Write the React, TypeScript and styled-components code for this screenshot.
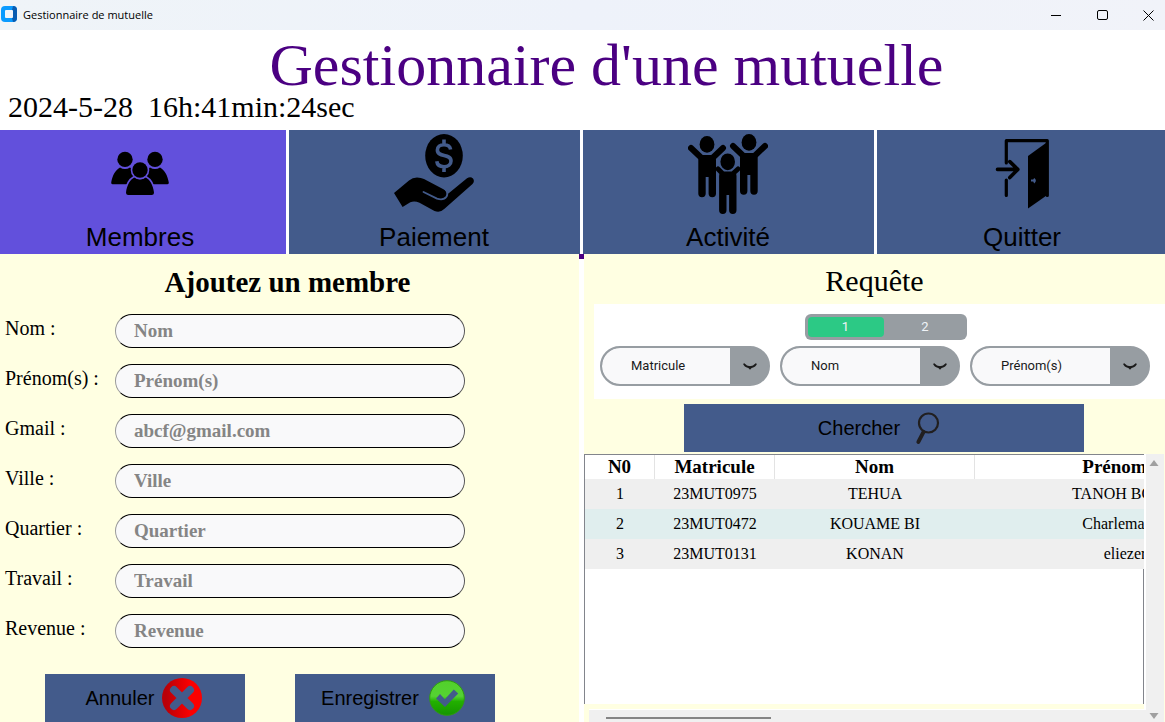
import React from "react";
import styled, { createGlobalStyle } from "styled-components";

const slate = "#435b8b";
const violet = "#6250dc";
const cream = "#ffffe2";
const indigo = "#4b0082";
const grey = "#979da2";
const serif = '"Liberation Serif", "Times New Roman", serif';
const sans = '"Liberation Sans", Arial, sans-serif';
const roboto = 'Roboto, "Liberation Sans", sans-serif';

const GlobalStyle = createGlobalStyle`
  * { box-sizing: border-box; }
  body { margin: 0; background: #fff; color: #000; font-family: ${serif}; overflow-x: hidden; }
  button, input, select { margin: 0; font: inherit; color: inherit; }
`;

const Window = styled.div`
  display: flex;
  flex-direction: column;
  min-height: 100vh;
`;

const TitleBar = styled.header`
  display: flex;
  align-items: center;
  height: 30px;
  margin-right: -6px;
  background: linear-gradient(90deg, #eff4f8, #eef2fa 50%, #f1f3f9);
  font: 11px/16px "Open Sans", "Noto Sans", sans-serif;
`;

const AppName = styled.span`
  flex: 1;
  margin-left: 5px;
`;

const WindowControl = styled.button`
  display: grid;
  place-items: center;
  width: 46px;
  height: 30px;
  padding: 0;
  border: 0;
  background: transparent;
`;

const Banner = styled.div`
  padding: 8px 0;
`;

const Title = styled.h1`
  margin: 0;
  padding-left: 48px;
  text-align: center;
  font: 60px/54px ${serif};
  color: ${indigo};
`;

const Clock = styled.time`
  display: block;
  padding-left: 8px;
  font-size: 30px;
  line-height: 30px;
  white-space: pre;
`;

const Tabs = styled.nav`
  display: grid;
  grid-template-columns: repeat(4, 1fr);
  gap: 3px;
  margin: 0 -3px 0 -5px;
`;

const Tab = styled.button<{ $active?: boolean }>`
  display: flex;
  flex-direction: column;
  align-items: center;
  gap: 8px;
  padding: 4px 1px 2px 0;
  border: 0;
  background: ${(p) => (p.$active ? violet : slate)};
  font: 26px/30px ${sans};
`;

const Body = styled.main`
  flex: 1;
  display: grid;
  grid-template-columns: minmax(0, 579fr) 5px minmax(0, 581fr);
`;

const Divider = styled.div`
  background: #fff;
  border-top: 5px solid ${indigo};
`;

const FormPanel = styled.form`
  padding-top: 12px;
  background: ${cream};
`;

const FormTitle = styled.h2`
  margin: 0 0 16px;
  padding-right: 4px;
  text-align: center;
  font: bold 29px/32px ${serif};
`;

const Fields = styled.div`
  display: grid;
  gap: 16px;
`;

const Field = styled.div`
  display: grid;
  grid-template-columns: 110px minmax(0, 350px);
  padding-left: 5px;
`;

const Label = styled.label`
  font-size: 20px;
  line-height: 28px;
`;

const TextBox = styled.input`
  height: 34px;
  padding: 0 18px;
  border: 1px solid #000;
  border-left-color: #999;
  border-right-color: #555;
  border-radius: 17px;
  background: #f9f9fa;
  font: bold 19px/22px ${serif};
  &::placeholder { color: #858585; opacity: 1; }
`;

const FormActions = styled.div`
  display: flex;
  gap: 50px;
  margin-top: 26px;
  padding-left: 45px;
`;

const ActionButton = styled.button<{ $wide?: boolean }>`
  display: flex;
  align-items: center;
  justify-content: center;
  gap: 8px;
  width: ${(p) => (p.$wide ? 400 : 200)}px;
  height: 48px;
  padding: 0 2px 0 0;
  border: 0;
  background: ${slate};
  font: 20px/24px ${sans};
`;

const QueryPanel = styled.section`
  display: flex;
  flex-direction: column;
  padding-top: 10px;
  background: ${cream};
`;

const QueryTitle = styled.h2`
  margin: 0 0 6px;
  text-align: center;
  font: 30px/34px ${serif};
`;

const FilterBox = styled.div`
  display: grid;
  gap: 6px;
  margin: 0 0 5px 10px;
  padding: 10px 0 13px;
  background: #fff;
  font: 13px/16px ${roboto};
`;

const Segments = styled.div`
  display: grid;
  grid-template-columns: 76px 1fr;
  justify-self: center;
  width: 162px;
  height: 26px;
  margin-left: 12px;
  padding: 3px 0 3px 3px;
  border-radius: 6px;
  background: ${grey};
`;

const Segment = styled.button<{ $active?: boolean }>`
  padding: 0;
  border: 0;
  border-radius: 4px;
  background: ${(p) => (p.$active ? "#2cc985" : "transparent")};
  color: #f0f4f8;
`;

const Filters = styled.div`
  display: flex;
  gap: 10px;
  padding-left: 6px;
`;

const FilterFrame = styled.div<{ $width: number }>`
  display: grid;
  grid-template-columns: minmax(0, 1fr) 38px;
  width: ${(p) => p.$width}px;
  height: 40px;
  border: 2px solid ${grey};
  border-radius: 20px;
  background: ${grey};
  overflow: hidden;
`;

const FilterSelect = styled.select`
  grid-area: 1 / 1;
  padding: 0 0 0 29px;
  border: 0;
  border-radius: 18px 0 0 18px;
  appearance: none;
  background: #f9f9fa;
  color: #1a1a1a;
`;

const FilterArrow = styled.svg`
  place-self: center;
  margin-left: 2px;
`;

const SearchRow = styled.div`
  display: flex;
  justify-content: center;
  margin-bottom: 2px;
  padding-left: 19px;
`;

const Results = styled.div`
  flex: 1;
  display: grid;
  grid-template-columns: minmax(0, 1fr) 20px;
  grid-template-rows: minmax(250px, 1fr) 18px;
  padding-right: 1px;
`;

const TableFrame = styled.div`
  display: flex;
  flex-direction: column;
  overflow: hidden;
  border-top: 1px solid #82858c;
  border-left: 1px solid #82858c;
  background: #fff;
`;

const Table = styled.table`
  width: 690px;
  table-layout: fixed;
  border-collapse: separate;
  border-spacing: 0;
  text-align: center;
`;

const HeadCell = styled.th<{ $width: number }>`
  width: ${(p) => p.$width}px;
  height: 24px;
  padding: 0;
  border-right: 1px solid #e3e3e3;
  font-size: 19px;
  line-height: 24px;
`;

const Row = styled.tr`
  background: #efefef;
  &:nth-child(even) { background: #e0eeee; }
`;

const Cell = styled.td`
  height: 30px;
  padding: 0;
  font-size: 16px;
  line-height: 30px;
`;

const TableRest = styled.div`
  flex: 1;
  border-right: 1px solid #82858c;
`;

const VerticalBar = styled.div`
  grid-area: 1 / 2 / 3 / 3;
  display: flex;
  flex-direction: column;
  justify-content: space-between;
  align-items: center;
  padding: 5px 2px 2px 0;
  border-left: 2px solid #fff;
  background: #f0f0f0;
`;

const HorizontalBar = styled.div`
  grid-area: 2 / 1;
  margin: 5px -2px 0 5px;
  padding: 7px 0 0 17px;
  border-top: 1px solid #fff;
  background: #f0f0f0;
  z-index: 1;
`;

const Thumb = styled.div`
  width: 165px;
  height: 2px;
  background: #858585;
`;

const AppMark = () => (
  <svg width="18" height="18" viewBox="0 0 18 18" aria-hidden="true">
    <rect x="1" y="0" width="16" height="16" rx="4" fill="#0a9bff" />
    <path d="M13 0a4 4 0 0 1 4 4v8a4 4 0 0 1-4 4l-1-4 1-1V5l-1-1z" fill="#0a5cb0" />
    <rect x="5" y="4" width="8" height="8" rx="1" fill="#f2f5fa" />
  </svg>
);

const MembersIcon = () => (
  <svg width="80" height="80" viewBox="0 0 80 80" aria-hidden="true">
    <circle cx="25" cy="25.4" r="7.7" />
    <circle cx="55" cy="25.4" r="7.7" />
    <path d="M12.5 50.2Q11 50.2 11.2 48.6C12.3 41 16 35.5 20 33.4Q25 36.6 30 33.4L36 38V50.2Z" />
    <path d="M67.5 50.2Q69 50.2 68.8 48.6C67.7 41 64 35.5 60 33.4Q55 36.6 50 33.4L44 38V50.2Z" />
    <g stroke={violet} strokeWidth="3.2" paintOrder="stroke">
      <path d="M28 61Q25.8 61 26 58.6C26.8 50.5 30.5 45.5 34.2 43.4Q40 47.6 45.8 43.4C49.5 45.5 53.2 50.5 54 58.6Q54.2 61 52 61Z" />
      <circle cx="40" cy="36" r="7.7" />
    </g>
  </svg>
);

const PaymentIcon = () => (
  <svg width="80" height="80" viewBox="0 0 80 80" aria-hidden="true">
    <ellipse cx="50" cy="21.7" rx="18.8" ry="21.7" />
    <path d="M50 5.5V11M50 32V38M56.6 15.5C56 12.3 53.5 10.8 50 10.8C46 10.8 43.4 13 43.4 16C43.4 24 57 19 57 27C57 30.5 54 32.7 50 32.7C46 32.7 43.2 31 42.8 27.3" fill="none" stroke={slate} strokeWidth="3.6" />
    <path d="M0 59L15 46.5Q18.5 43.5 23 43.5Q27 43.5 30 45L48 54.5Q53.5 57 53.2 60.5L73 44.3Q76.5 42 79 44.5Q81 47.5 78.5 50L50.5 74.8Q46.5 79 40.5 77L25.5 68.8Q20.5 66.5 16.3 68.3L8.6 73Z" />
    <path d="M29.5 58L43 64.6Q49.5 66.8 52.6 62.5Q54.5 58.5 51.2 55.2" fill="none" stroke={slate} strokeWidth="1.8" strokeLinecap="round" />
  </svg>
);

const ActivityIcon = () => (
  <svg width="80" height="80" viewBox="0 0 80 80" aria-hidden="true" strokeLinecap="round" strokeLinejoin="round">
    <ellipse cx="19" cy="10.4" rx="7.4" ry="8.4" />
    <ellipse cx="61" cy="8.4" rx="7.4" ry="8.4" />
    <g fill="none" stroke="#000">
      <path d="M3 14L13.5 24H24.5L35 14" strokeWidth="6" />
      <path d="M45 12L55.5 22H66.5L77 12" strokeWidth="6" />
      <path d="M14 26V59.5M24.3 26V59.5M55.7 24V57M66 24V57" strokeWidth="7.4" />
    </g>
    <path d="M14 24H24V43H14ZM56 22H66V41H56Z" />
    <ellipse cx="39.7" cy="27.8" rx="8.7" ry="9.7" fill={slate} />
    <path d="M34.8 76.5V42M44.8 76.5V42" fill="none" stroke={slate} strokeWidth="9" />
    <ellipse cx="39.7" cy="27.8" rx="7.3" ry="8.4" />
    <g fill="none" stroke="#000">
      <path d="M30 35L35 40H44.5L50 35" strokeWidth="5" />
      <path d="M34.8 42V76.3M44.8 42V76.3" strokeWidth="7.4" />
    </g>
    <path d="M34 39H45V61H34Z" />
  </svg>
);

const ExitIcon = () => (
  <svg width="80" height="80" viewBox="0 0 80 80" aria-hidden="true">
    <g fill="none" stroke="#000" strokeWidth="3.2" strokeLinecap="round" strokeLinejoin="round">
      <path d="M24.3 61.5V46M24.3 29V6.7H65.3V61.5" />
      <path d="M15.5 35.4H35.5M27.8 27.6L35.8 35.4L27.8 43.6" strokeWidth="3.6" />
    </g>
    <path d="M46 22L65.3 8V61L46 74.5Z" />
    <path d="M49 45.6H51.2L52.2 44Q55.6 46.5 52.2 49.6L51.2 47.6H49Z" fill={slate} />
  </svg>
);

const CancelIcon = () => (
  <svg width="40" height="40" viewBox="0 0 40 40" aria-hidden="true">
    <defs>
      <linearGradient id="cancelRed">
        <stop offset="0.1" stopColor="#b90008" />
        <stop offset="0.7" stopColor="#fb0000" />
      </linearGradient>
    </defs>
    <circle cx="20" cy="20" r="20" fill="url(#cancelRed)" />
    <path d="M12 12L28 28M28 12L12 28" stroke={slate} strokeWidth="8" strokeLinecap="round" />
  </svg>
);

const SaveIcon = () => (
  <svg width="40" height="40" viewBox="0 0 40 40" aria-hidden="true">
    <defs>
      <linearGradient id="saveGreen" x1="0" y1="0" x2="0" y2="1">
        <stop offset="0" stopColor="#52d02b" />
        <stop offset="0.45" stopColor="#55d233" />
        <stop offset="0.6" stopColor="#22b000" />
        <stop offset="1" stopColor="#159500" />
      </linearGradient>
    </defs>
    <circle cx="20" cy="20" r="17.3" fill="url(#saveGreen)" stroke="#2f9c10" />
    <path d="M9 20.5L13 16L17.8 21.2L26.8 11.5L31.2 15.6L18 29Z" fill={slate} />
  </svg>
);

const SearchIcon = () => (
  <svg width="40" height="40" viewBox="0 0 40 40" aria-hidden="true" fill="none" stroke="#211f20" strokeLinecap="round">
    <circle cx="20.5" cy="15" r="9.5" strokeWidth="2.2" />
    <path d="M15.5 24L10.3 34" strokeWidth="3.8" />
  </svg>
);

const tabs = [
  { name: "Membres", Icon: MembersIcon, active: true },
  { name: "Paiement", Icon: PaymentIcon },
  { name: "Activité", Icon: ActivityIcon },
  { name: "Quitter", Icon: ExitIcon },
];

const fields = [
  { name: "Nom", hint: "Nom" },
  { name: "Prénom(s)", hint: "Prénom(s)" },
  { name: "Gmail", hint: "abcf@gmail.com" },
  { name: "Ville", hint: "Ville" },
  { name: "Quartier", hint: "Quartier" },
  { name: "Travail", hint: "Travail" },
  { name: "Revenue", hint: "Revenue" },
];

const filters = [
  { name: "Matricule", width: 170 },
  { name: "Nom", width: 180 },
  { name: "Prénom(s)", width: 180 },
];

const columns = [
  { name: "N0", width: 70 },
  { name: "Matricule", width: 120 },
  { name: "Nom", width: 200 },
  { name: "Prénom(s)", width: 300 },
];

const rows = [
  ["1", "23MUT0975", "TEHUA", "TANOH BORIS"],
  ["2", "23MUT0472", "KOUAME BI", "Charlemagne"],
  ["3", "23MUT0131", "KONAN", "eliezer"],
];

export default function App() {
  return (
    <Window>
      <GlobalStyle />
      <TitleBar>
        <AppMark />
        <AppName>Gestionnaire de mutuelle</AppName>
        <WindowControl aria-label="Réduire">
          <svg width="11" height="11" viewBox="0 0 11 11"><path d="M0 5.5H10" stroke="#000" /></svg>
        </WindowControl>
        <WindowControl aria-label="Agrandir">
          <svg width="11" height="11" viewBox="0 0 11 11"><rect x="0.5" y="0.5" width="10" height="9" rx="1.5" fill="none" stroke="#000" /></svg>
        </WindowControl>
        <WindowControl aria-label="Fermer">
          <svg width="11" height="11" viewBox="0 0 11 11"><path d="M0.5 0.5L10.5 10.5M10.5 0.5L0.5 10.5" stroke="#000" /></svg>
        </WindowControl>
      </TitleBar>
      <Banner>
        <Title>Gestionnaire d'une mutuelle</Title>
        <Clock>{"2024-5-28  16h:41min:24sec"}</Clock>
      </Banner>
      <Tabs>
        {tabs.map(({ name, Icon, active }) => (
          <Tab key={name} $active={active}>
            <Icon />
            {name}
          </Tab>
        ))}
      </Tabs>
      <Body>
        <FormPanel onSubmit={(e) => e.preventDefault()}>
          <FormTitle>Ajoutez un membre</FormTitle>
          <Fields>
            {fields.map(({ name, hint }) => (
              <Field key={name}>
                <Label htmlFor={`field-${name}`}>{name} :</Label>
                <TextBox id={`field-${name}`} placeholder={hint} />
              </Field>
            ))}
          </Fields>
          <FormActions>
            <ActionButton type="reset">Annuler<CancelIcon /></ActionButton>
            <ActionButton type="submit">Enregistrer<SaveIcon /></ActionButton>
          </FormActions>
        </FormPanel>
        <Divider />
        <QueryPanel>
          <QueryTitle>Requête</QueryTitle>
          <FilterBox>
            <Segments>
              <Segment $active>1</Segment>
              <Segment>2</Segment>
            </Segments>
            <Filters>
              {filters.map(({ name, width }) => (
                <FilterFrame key={name} $width={width}>
                  <FilterSelect aria-label={name}>
                    <option>{name}</option>
                  </FilterSelect>
                  <FilterArrow width="14" height="8" viewBox="0 0 14 8" aria-hidden="true">
                    <path d="M1.2 2.2Q3 5 7 5.2Q11 5 12.8 2.2" fill="none" stroke="#1a1a1a" strokeWidth="1.8" strokeLinecap="round" />
                    <path d="M4 4.6L7 7.8L10 4.6Z" fill="#1a1a1a" />
                  </FilterArrow>
                </FilterFrame>
              ))}
            </Filters>
          </FilterBox>
          <SearchRow>
            <ActionButton $wide>Chercher<SearchIcon /></ActionButton>
          </SearchRow>
          <Results>
            <TableFrame>
              <Table>
                <thead>
                  <tr>
                    {columns.map(({ name, width }) => (
                      <HeadCell key={name} $width={width}>{name}</HeadCell>
                    ))}
                  </tr>
                </thead>
                <tbody>
                  {rows.map((row) => (
                    <Row key={row[0]}>
                      {row.map((value) => (
                        <Cell key={value}>{value}</Cell>
                      ))}
                    </Row>
                  ))}
                </tbody>
              </Table>
              <TableRest />
            </TableFrame>
            <VerticalBar>
              <svg width="10" height="8" viewBox="0 0 10 8"><path d="M5 1L9.5 7H0.5Z" fill="#a0a0a0" /></svg>
              <svg width="10" height="8" viewBox="0 0 10 8"><path d="M5 7L9.5 1H0.5Z" fill="#a0a0a0" /></svg>
            </VerticalBar>
            <HorizontalBar>
              <Thumb />
            </HorizontalBar>
          </Results>
        </QueryPanel>
      </Body>
    </Window>
  );
}
